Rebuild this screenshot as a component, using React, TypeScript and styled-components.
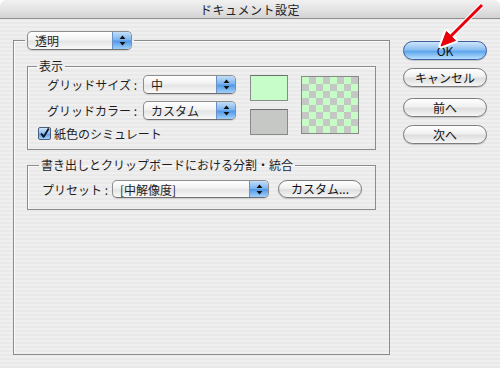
import React from "react";
import styled, { createGlobalStyle } from "styled-components";

const GlobalStyle = createGlobalStyle`
  html, body {
    margin: 0;
    padding: 0;
    background: #ffffff;
  }
  body {
    font-family: "Noto Sans CJK JP", "Noto Sans", sans-serif;
    color: #1e1e1e;
  }
`;

const stripes = `repeating-linear-gradient(
  to bottom,
  #efefef 0px,
  #efefef 2px,
  #e9e9e9 2px,
  #e9e9e9 4px
)`;

const Window = styled.div`
  position: relative;
  width: 500px;
  height: 368px;
  display: flex;
  flex-direction: column;
  overflow: hidden;
`;

const TitleBar = styled.div`
  height: 18px;
  border-bottom: 1px solid #8f8f8f;
  border-radius: 6px 6px 0 0;
  background: linear-gradient(#f1f1f1, #e4e4e4 50%, #d3d3d3);
  display: flex;
  align-items: center;
  justify-content: center;
  font-size: 12px;
  letter-spacing: 0.5px;
  color: #222;
`;

const Body = styled.div`
  flex: 1;
  display: flex;
  gap: 13px;
  padding: 12px 13px 0 13px;
  background: ${stripes};
  background-attachment: fixed;
`;

const Group = styled.fieldset<{ $outer?: boolean }>`
  margin: 0;
  padding: 0;
  min-width: 0;
  box-sizing: border-box;
  border: 1px solid #8b8b8b;
  box-shadow: inset 1px 1px 0 #fbfbfb;
  width: ${(p) => (p.$outer ? "377px" : "349px")};
  height: ${(p) => (p.$outer ? "324px" : "auto")};
`;

const Legend = styled.legend<{ $indent: number }>`
  margin-left: ${(p) => p.$indent}px;
  padding: 0 2px;
  font-size: 12px;
  line-height: 14px;
`;

const GroupBody = styled.div<{ $top: number; $left: number; $bottom: number }>`
  padding: ${(p) => `${p.$top}px 0 ${p.$bottom}px ${p.$left}px`};
  display: flex;
  gap: 14px;
`;

const Stack = styled.div<{ $gap: number; $top?: number; $side?: number }>`
  display: flex;
  flex-direction: column;
  gap: ${(p) => p.$gap}px;
  margin-top: ${(p) => p.$top ?? 0}px;
  padding: 0 ${(p) => p.$side ?? 0}px;
`;

const Row = styled.div<{ $gap?: number }>`
  display: flex;
  align-items: center;
  gap: ${(p) => p.$gap ?? 6}px;
`;

const Label = styled.span<{ $w: number }>`
  width: ${(p) => p.$w}px;
  text-align: right;
  font-size: 12px;
  white-space: nowrap;
`;

const Popup = styled.div<{ $w: number; $h?: number }>`
  width: ${(p) => p.$w}px;
  height: ${(p) => p.$h ?? 19}px;
  box-sizing: border-box;
  display: flex;
  border: 1px solid #8d8d8d;
  border-bottom-color: #6f6f6f;
  border-radius: 5px;
  overflow: hidden;
  background: linear-gradient(#ffffff, #f1f1f1 45%, #e4e4e4 55%, #f9f9f9);
  box-shadow: 0 1px 1px rgba(0, 0, 0, 0.12);
`;

const PopupText = styled.span`
  flex: 1;
  padding-left: 7px;
  font-size: 12px;
  display: flex;
  align-items: center;
  white-space: nowrap;
`;

const Stepper = styled.span`
  width: 18px;
  border-left: 1px solid #6b8fc9;
  background: linear-gradient(#c4def8, #79b3ef 48%, #4f97e6 52%, #9fd0fb);
  display: flex;
  align-items: center;
  justify-content: center;
`;

const Swatch = styled.div<{ $color: string }>`
  width: 38px;
  height: 26px;
  box-sizing: border-box;
  border: 1px solid #8a8a8a;
  border-top-color: #6e6e6e;
  background: ${(p) => p.$color};
`;

const Checker = styled.div`
  width: 58px;
  height: 58px;
  margin: 1px 0 0 -1px;
  box-sizing: border-box;
  border: 1px solid #8a8a8a;
  background-color: #c6fdc7;
  background-image: conic-gradient(
    #c5c7c5 0 25%,
    transparent 0 50%,
    #c5c7c5 0 75%,
    transparent 0
  );
  background-size: 14px 14px;
`;

const CheckRow = styled.label`
  display: flex;
  align-items: center;
  gap: 3px;
  font-size: 12px;
  height: 14px;
`;

const CheckBox = styled.span`
  width: 13px;
  height: 13px;
  box-sizing: border-box;
  border: 1px solid #4b5d7a;
  border-radius: 2px;
  background: linear-gradient(#d2e6fb, #83b9ef 50%, #5e9fe6 55%, #a7d3fb);
  display: flex;
  align-items: center;
  justify-content: center;
  overflow: visible;
`;

const ButtonColumn = styled.div`
  display: flex;
  flex-direction: column;
  padding-top: 10px;
`;

const PushButton = styled.button<{ $primary?: boolean; $gap?: number; $w?: number; $h?: number; $left?: number }>`
  width: ${(p) => p.$w ?? 84}px;
  height: ${(p) => p.$h ?? 19}px;
  margin: ${(p) => p.$gap ?? 0}px 0 0 ${(p) => p.$left ?? 0}px;
  padding: 0;
  box-sizing: border-box;
  border-radius: 10px;
  font-family: "Noto Sans CJK JP", "Noto Sans", sans-serif;
  font-size: 12px;
  line-height: 1;
  color: #111;
  border: 1px solid ${(p) => (p.$primary ? "#3d5f9e" : "#7c7c7c")};
  background: ${(p) =>
    p.$primary
      ? "linear-gradient(#cfe4fa, #8cc0f2 45%, #5ea6ec 55%, #b8e0ff)"
      : "linear-gradient(#ffffff, #f0f0f0 45%, #dedede 55%, #f6f6f6)"};
  box-shadow: 0 1px 1px rgba(0, 0, 0, 0.18);
`;

const ArrowOverlay = styled.svg`
  position: absolute;
  left: 0;
  top: 0;
  pointer-events: none;
`;

const StepArrows = () => (
  <svg width="7" height="11" viewBox="0 0 7 11">
    <path d="M3.5 0.5 L6.5 4 L0.5 4 Z" fill="#111" />
    <path d="M3.5 10.5 L6.5 7 L0.5 7 Z" fill="#111" />
  </svg>
);

const Select = ({ value, w, h }: { value: string; w: number; h?: number }) => (
  <Popup $w={w} $h={h}>
    <PopupText>{value}</PopupText>
    <Stepper>
      <StepArrows />
    </Stepper>
  </Popup>
);

const App: React.FC = () => {
  return (
    <>
      <GlobalStyle />
      <Window>
        <TitleBar>ドキュメント設定</TitleBar>
        <Body>
          <Group $outer>
            <Legend $indent={11}>
              <Select value="透明" w={105} />
            </Legend>

            <Stack $gap={8} $top={9} $side={13}>
              {/* 表示 */}
              <Group>
                <Legend $indent={9}>表示</Legend>
                <GroupBody $top={2} $left={10} $bottom={9}>
                  <Stack $gap={6}>
                    <Stack $gap={7}>
                      <Row>
                        <Label $w={99}>グリッドサイズ :</Label>
                        <Select value="中" w={93} />
                      </Row>
                      <Row>
                        <Label $w={99}>グリッドカラー :</Label>
                        <Select value="カスタム" w={93} />
                      </Row>
                    </Stack>
                    <CheckRow>
                      <CheckBox>
                        <svg width="13" height="13" viewBox="0 0 13 13">
                          <path
                            d="M2.5 6.5 L5.5 10.5 L11.5 0.5"
                            fill="none"
                            stroke="#0d1220"
                            strokeWidth="2.2"
                            strokeLinejoin="round"
                          />
                        </svg>
                      </CheckBox>
                      紙色のシミュレート
                    </CheckRow>
                  </Stack>
                  <Stack $gap={8}>
                    <Swatch $color="#c6fdc8" />
                    <Swatch $color="#c5c8c5" />
                  </Stack>
                  <Checker />
                </GroupBody>
              </Group>

              {/* 書き出しとクリップボード */}
              <Group>
                <Legend $indent={11}>書き出しとクリップボードにおける分割・統合</Legend>
                <GroupBody $top={8} $left={14} $bottom={11}>
                  <Row $gap={6}>
                    <Label $w={64}>プリセット :</Label>
                    <Select value="[中解像度]" w={157} h={18} />
                    <PushButton $w={84} $h={18} $left={3}>
                      カスタム...
                    </PushButton>
                  </Row>
                </GroupBody>
              </Group>
            </Stack>
          </Group>

          <ButtonColumn>
            <PushButton $primary>OK</PushButton>
            <PushButton $gap={8}>キャンセル</PushButton>
            <PushButton $gap={11}>前へ</PushButton>
            <PushButton $gap={8}>次へ</PushButton>
          </ButtonColumn>
        </Body>

        <ArrowOverlay width="500" height="368" viewBox="0 0 500 368">
          <g stroke="#ffffff" strokeWidth="5" fill="#ffffff" strokeLinejoin="round">
            <line x1="482" y1="5" x2="451" y2="36" />
            <polygon points="441,46 455.5,40.5 446.5,31.5" />
          </g>
          <g stroke="#e8000b" strokeWidth="3" fill="#e8000b" strokeLinejoin="round">
            <line x1="482" y1="5" x2="451" y2="36" />
            <polygon points="441,46 455.5,40.5 446.5,31.5" strokeWidth="1" />
          </g>
        </ArrowOverlay>
      </Window>
    </>
  );
};

export default App;
